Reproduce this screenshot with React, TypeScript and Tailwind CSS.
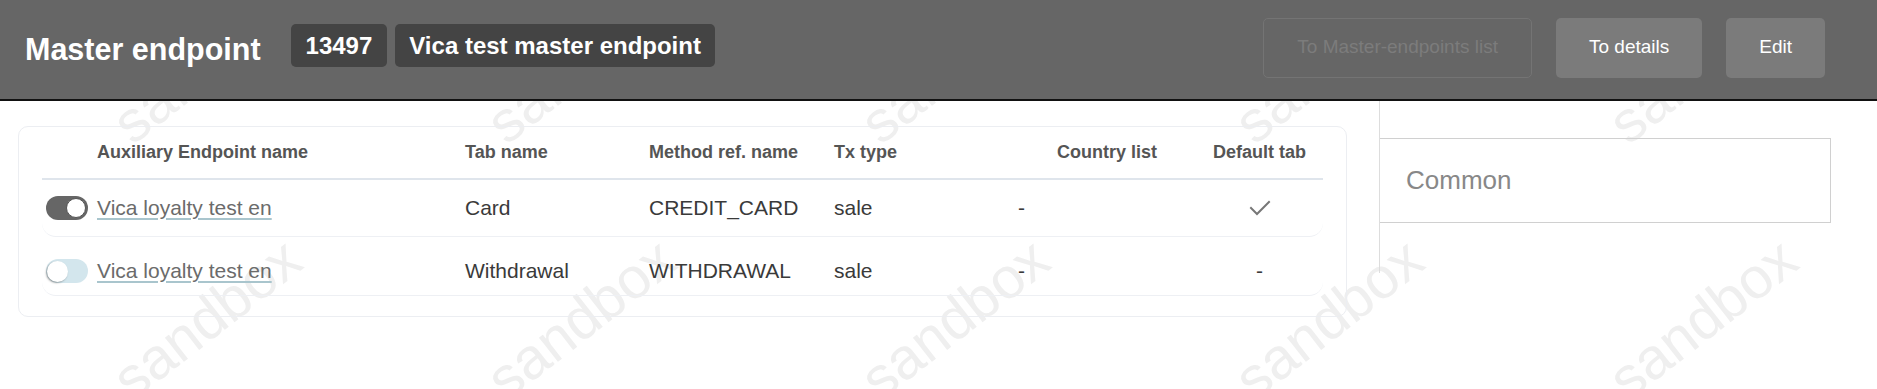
import React from 'react'

type AuxRow = {
  active: boolean
  name: string
  tab: string
  method: string
  tx: string
  countries: string
  isDefault: boolean
}

const rows: AuxRow[] = [
  { active: true, name: 'Vica loyalty test en', tab: 'Card', method: 'CREDIT_CARD', tx: 'sale', countries: '-', isDefault: true },
  { active: false, name: 'Vica loyalty test en', tab: 'Withdrawal', method: 'WITHDRAWAL', tx: 'sale', countries: '-', isDefault: false },
]

const grid = 'grid grid-cols-[423px_184px_185px_184px_178px_127px] items-center'

function Watermark() {
  const xs = [138, 512, 886, 1260, 1634]
  const ys = [153, 409]
  return (
    <div aria-hidden className="pointer-events-none absolute inset-0 overflow-hidden select-none">
      {ys.map((y) =>
        xs.map((x) => (
          <span
            key={`${x}-${y}`}
            className="absolute origin-bottom-left -rotate-[38deg] text-[58px] leading-none text-[#efefef]"
            style={{ left: x, top: y - 58 }}
          >
            sandbox
          </span>
        )),
      )}
    </div>
  )
}

function Toggle({ on }: { on: boolean }) {
  return (
    <span
      className={
        on
          ? 'flex h-[24px] w-[42px] shrink-0 items-center justify-end rounded-full bg-[#666666] px-[2px]'
          : 'flex h-[24px] w-[42px] shrink-0 items-center justify-start rounded-full bg-[#d3e6ed] px-[1px]'
      }
    >
      <span
        className={
          on
            ? 'h-[20px] w-[20px] rounded-full border border-[#555] bg-white'
            : 'h-[21px] w-[21px] rounded-full bg-white shadow-[-1px_1px_2px_rgba(0,0,0,0.35)]'
        }
      />
    </span>
  )
}

function Check() {
  return (
    <svg width="22" height="18" viewBox="0 0 22 18" fill="none" className="mx-auto">
      <polyline points="2,9 8,15 20,3" stroke="#777" strokeWidth="2" strokeLinecap="square" />
    </svg>
  )
}

export default function App() {
  return (
    <div className="relative h-[389px] overflow-hidden bg-white font-['Liberation_Sans',Arial,sans-serif]">
      <Watermark />

      <header className="relative z-10 flex h-[101px] items-center justify-between border-b-2 border-[#111] bg-[#666666] pl-[25px] pr-[52px]">
        <div className="flex items-center">
          <h1 className="text-[30.5px] font-bold text-white">Master endpoint</h1>
          <div className="mb-[8px] ml-[30px] flex gap-[8px]">
            <span className="flex h-[43px] items-center rounded-[5px] bg-[#444444] px-[15px] text-[24px] font-bold text-white">
              13497
            </span>
            <span className="flex h-[43px] items-center rounded-[5px] bg-[#444444] px-[14px] text-[24px] font-bold text-white">
              Vica test master endpoint
            </span>
          </div>
        </div>
        <div className="mb-[4px] flex gap-6">
          <button className="h-[60px] rounded-[5px] border border-[#747474] px-[33px] text-[19px] text-[#7c7c7c]">
            To Master-endpoints list
          </button>
          <button className="h-[60px] rounded-[5px] bg-[#7b7b7b] px-[33px] text-[19px] text-white">To details</button>
          <button className="h-[60px] rounded-[5px] bg-[#7b7b7b] px-[33px] text-[19px] text-white">Edit</button>
        </div>
      </header>

      <main className="relative flex items-start pl-[18px]">
        <section className="mt-[25px] w-[1329px] rounded-[10px] border border-[#eceef2] px-[23px] pb-[20px]">
          <div className={`${grid} h-[53px] border-b-2 border-[#dfe5ec] text-[18px] font-bold text-[#555]`}>
            <div className="pl-[55px]">Auxiliary Endpoint name</div>
            <div>Tab name</div>
            <div>Method ref. name</div>
            <div>Tx type</div>
            <div className="text-center">Country list</div>
            <div className="text-center">Default tab</div>
          </div>
          {rows.map((r, i) => (
            <div
              key={i}
              className={`${grid} ${i === 0 ? 'h-[57px]' : 'h-[59px] pt-[10px]'} rounded-b-[14px] border-b border-[#eef0f4] text-[21px] text-[#3a3a3a]`}
            >
              <div className="flex items-center gap-[9px] pl-[4px]">
                <Toggle on={r.active} />
                <a
                  href="#"
                  className="text-[#6b6b6b] underline decoration-[#a9c5cd] decoration-2 underline-offset-[3px]"
                >
                  {r.name}
                </a>
              </div>
              <div>{r.tab}</div>
              <div>{r.method}</div>
              <div>{r.tx}</div>
              <div>{r.countries}</div>
              <div className="text-center">{r.isDefault ? <Check /> : '-'}</div>
            </div>
          ))}
        </section>

        <aside className="ml-8 h-[172px] w-[452px] border-l border-[#dddddd] pt-[37px]">
          <div className="flex h-[85px] items-center border-y border-r border-[#d0d0d0] pl-[26px] text-[26px] text-[#888888]">
            Common
          </div>
        </aside>
      </main>
    </div>
  )
}
